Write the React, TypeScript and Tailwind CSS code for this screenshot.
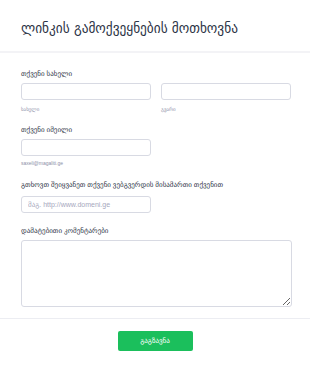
const font = { fontFamily: '"Liberation Sans", "DejaVu Sans", sans-serif' };
const titleFont = { fontFamily: '"DejaVu Sans Condensed", "DejaVu Sans", sans-serif' };

const Label = ({ text }: { text: string }) => (
  <div className="text-[7px] leading-[10px] text-[#2c3345]">{text}</div>
);

const Sub = ({ text }: { text: string }) => (
  <div className="text-[5px] leading-[8px] text-[#8d8fa8]">{text}</div>
);

const inputCls =
  "block h-[17px] w-[130px] rounded-[3px] border border-[#d8dae3] bg-white px-[6px] text-[7px] text-[#2c3345] outline-none placeholder:text-[#a6a8bd]";

export default function App() {
  return (
    <div className="min-h-[367px] w-[310px] bg-white" style={font}>
      <div className="h-[53px] border-b-2 border-[#f3f3f6] px-[21px] pt-[18px]">
        <h1 className="whitespace-nowrap text-[14.8px] font-medium leading-[20px] text-[#2c3345]" style={titleFont}>
          ლინკის გამოქვეყნების მოთხოვნა
        </h1>
      </div>

      <div className="px-[21px] pt-[16px]">
        <Label text="თქვენი სახელი" />
        <div className="mt-[4px] flex gap-[10px]">
          <div>
            <input className={inputCls} />
            <div className="mt-[5px]">
              <Sub text="სახელი" />
            </div>
          </div>
          <div>
            <input className={inputCls} />
            <div className="mt-[5px]">
              <Sub text="გვარი" />
            </div>
          </div>
        </div>

        <div className="mt-[12px]">
          <Label text="თქვენი იმეილი" />
        </div>
        <input className={`${inputCls} mt-[4px]`} />
        <div className="mt-[3px]">
          <Sub text="saxeli@magaliti.ge" />
        </div>

        <div className="mt-[13px]">
          <Label text="გთხოვთ შეიყვანეთ თქვენი ვებგვერდის მისამართი თქვენით" />
        </div>
        <input className={`${inputCls} mt-[6px]`} placeholder="მაგ. http://www.domeni.ge" />

        <div className="mt-[13px]">
          <Label text="დამატებითი კომენტარები" />
        </div>
        <textarea className="mt-[4px] block h-[67px] w-[271px] rounded-[3px] border border-[#d8dae3] bg-white outline-none" />
      </div>

      <div className="mt-[11px] border-t border-[#ecedf2] pt-[12px] pb-[16px]">
        <div className="flex justify-center">
          <button className="h-[20px] w-[75px] rounded-[2px] bg-[#1bbf5c] text-[7px] text-white">
            გაგზავნა
          </button>
        </div>
      </div>
    </div>
  );
}
